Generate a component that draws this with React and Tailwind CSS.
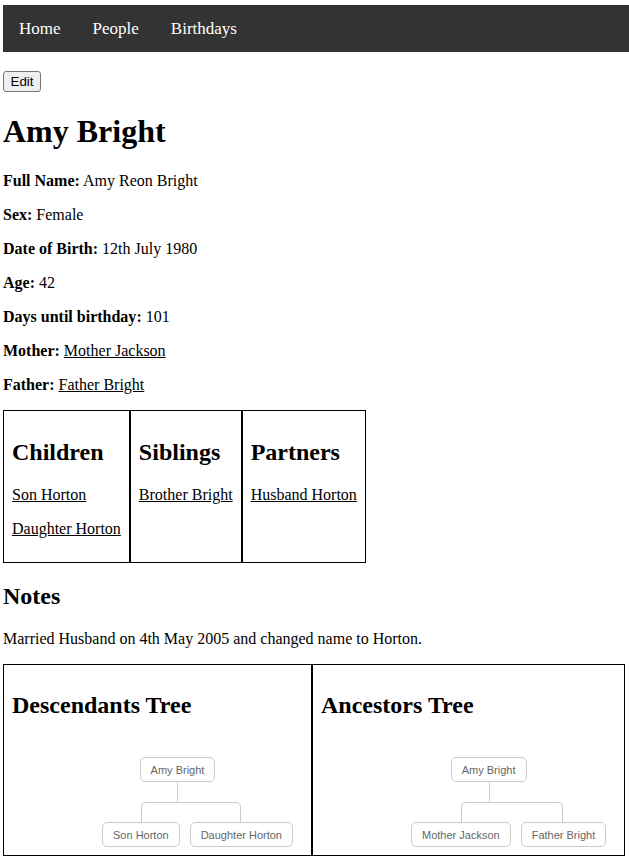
import React from 'react'

const person = {
  name: 'Amy Bright',
  fullName: 'Amy Reon Bright',
  sex: 'Female',
  dob: '12th July 1980',
  age: 42,
  daysUntil: 101,
  mother: 'Mother Jackson',
  father: 'Father Bright',
  children: ['Son Horton', 'Daughter Horton'],
  siblings: ['Brother Bright'],
  partners: ['Husband Horton'],
  notes: 'Married Husband on 4th May 2005 and changed name to Horton.',
}

function Node({ children }) {
  return (
    <div className="flex items-center h-[25px] border border-[#ccc] rounded-[5px] px-[10px] text-[11px] leading-[normal] text-[#666] font-['Liberation_Sans',Arial,sans-serif] whitespace-nowrap">
      {children}
    </div>
  )
}

function Tree({ root, items }) {
  return (
    <div className="flex pl-10 pt-[18px]">
      <div className="flex flex-col items-center px-[5px]">
        <Node>{root}</Node>
        <div className="relative flex pl-10 pt-5">
          {/* line down from parent */}
          <div className="absolute left-1/2 top-0 h-5 border-l border-[#ccc]" />
          {items.map((item, i) => {
            const first = i === 0
            const last = i === items.length - 1
            return (
              <div key={item} className="relative flex flex-col items-center px-[5px] pt-5">
                {!first && (
                  <div
                    className={
                      'absolute right-1/2 top-0 w-1/2 h-5 border-t border-[#ccc] ' +
                      (last ? 'border-r rounded-tr-[5px]' : '')
                    }
                  />
                )}
                {!last && (
                  <div
                    className={
                      'absolute left-1/2 top-0 w-1/2 h-5 border-t border-l border-[#ccc] ' +
                      (first ? 'rounded-tl-[5px]' : '')
                    }
                  />
                )}
                <Node>{item}</Node>
              </div>
            )
          })}
        </div>
      </div>
    </div>
  )
}

function Field({ label, children }) {
  return (
    <p className="my-4">
      <b className="font-bold">{label}:</b> {children}
    </p>
  )
}

function LinkList({ title, names }) {
  return (
    <div className="border border-black p-2">
      <h2 className="text-[24px] font-bold my-[19.92px]">{title}</h2>
      {names.map((n) => (
        <p key={n} className="my-4">
          <a href="#" className="underline text-black">{n}</a>
        </p>
      ))}
    </div>
  )
}

export default function App() {
  return (
    <div className="pl-[3px] pt-[5px] font-['Liberation_Serif','Times_New_Roman',serif] text-[16px] leading-[normal] text-black bg-white min-h-screen">
      {/* Navbar */}
      <nav className="flex items-center h-[47px] bg-[#333]">
        {['Home', 'People', 'Birthdays'].map((item) => (
          <a key={item} href="#" className="px-4 text-[17px] text-white">{item}</a>
        ))}
      </nav>

      <div className="mt-[19px] h-[21px]">
        <button className="flex items-center justify-center w-[38px] h-[21px] bg-[#efefef] border border-[#767676] rounded-[3px] text-[13.33px] leading-[normal] font-['Liberation_Sans',Arial,sans-serif] text-black">
          Edit
        </button>
      </div>

      <h1 className="text-[32px] font-bold my-[21.44px]">{person.name}</h1>

      <Field label="Full Name">{person.fullName}</Field>
      <Field label="Sex">{person.sex}</Field>
      <Field label="Date of Birth">{person.dob}</Field>
      <Field label="Age">{person.age}</Field>
      <Field label="Days until birthday">{person.daysUntil}</Field>
      <Field label="Mother">
        <a href="#" className="underline text-black">{person.mother}</a>
      </Field>
      <Field label="Father">
        <a href="#" className="underline text-black">{person.father}</a>
      </Field>

      {/* Relations */}
      <div className="flex w-fit">
        <LinkList title="Children" names={person.children} />
        <LinkList title="Siblings" names={person.siblings} />
        <LinkList title="Partners" names={person.partners} />
      </div>

      <h2 className="text-[24px] font-bold my-[19.92px]">Notes</h2>
      <p className="my-4">{person.notes}</p>

      {/* Trees */}
      <div className="flex w-[622px]">
        <div className="w-[309px] border border-black p-2">
          <h2 className="text-[24px] font-bold my-[19.92px]">Descendants Tree</h2>
          <Tree root={person.name} items={person.children} />
        </div>
        <div className="w-[313px] border border-black p-2">
          <h2 className="text-[24px] font-bold my-[19.92px]">Ancestors Tree</h2>
          <Tree root={person.name} items={[person.mother, person.father]} />
        </div>
      </div>
    </div>
  )
}
